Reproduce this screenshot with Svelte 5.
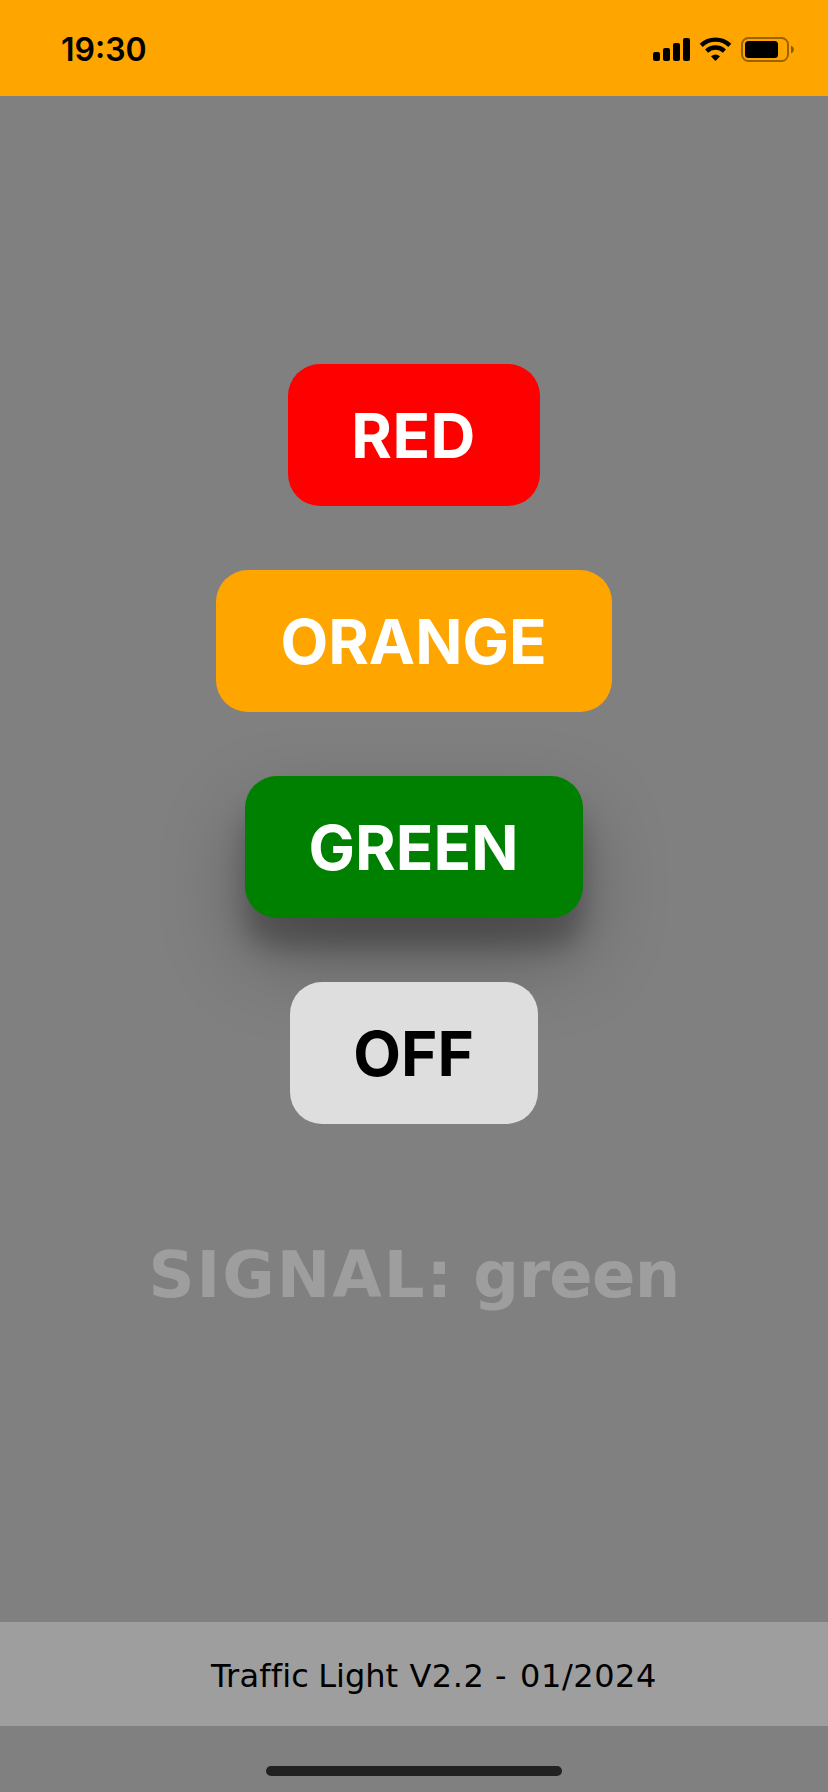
<script>
  let signal = $state('green');
  const lights = ['red', 'orange', 'green', 'off'];
  const version = [
    ['name', 'Traffic '],
    ['title', 'Light '],
    ['number', 'V2.2 '],
    ['dash', '- '],
    ['date', '01/2024']
  ];
</script>

<div class="app">
  <header>
    <time>19:30</time>
    <svg width="142" height="26" viewBox="0 0 142 26" aria-hidden="true">
      <rect x="0" y="15" width="7" height="9" rx="2" />
      <rect x="10" y="11" width="7" height="13" rx="2" />
      <rect x="20" y="6" width="7" height="18" rx="2" />
      <rect x="30" y="1" width="7" height="23" rx="2" />
      <g fill="none" stroke="#000" stroke-width="4.3">
        <path d="M48.2 8.4a20.6 20.6 0 0 1 28.6 0" />
        <path d="M53.6 14.1a12.8 12.8 0 0 1 17.8 0" />
      </g>
      <path d="M58 19.2q4.5-3.6 9 0l-3.6 4q-.9.9-1.8 0z" />
      <rect x="89" y="1" width="46" height="23" rx="6.5" fill="none" stroke="#000" stroke-opacity=".4" stroke-width="2" />
      <rect x="92" y="4" width="33" height="17" rx="3.5" />
      <path d="M138 8.5q3 1.5 3 4t-3 4z" fill-opacity=".45" />
    </svg>
  </header>

  <main>
    {#each lights as light}
      <button class={light} class:active={signal === light} onclick={() => (signal = light)}>
        <span>{light.toUpperCase()}</span>
      </button>
    {/each}
    <p><span class="label">{'SIGNAL: '}</span><span class="value">{signal}</span></p>
  </main>

  <footer>
    <div class="version">{#each version as [part, text]}<span class={part}>{text}</span>{/each}</div>
  </footer>
  <div class="home"><i></i></div>
</div>

<style>
  :global(body) {
    margin: 0;
    background: #808080;
  }
  .app {
    width: 828px;
    height: 1792px;
    display: flex;
    flex-direction: column;
    background: #808080;
    overflow: hidden;
  }
  header {
    height: 96px;
    flex: none;
    box-sizing: border-box;
    padding: 0 33px 0 61px;
    display: flex;
    align-items: center;
    justify-content: space-between;
    background: #ffa500;
  }
  time {
    font: 600 32px/40px Inter, sans-serif;
    padding-top: 4px;
  }
  header svg {
    padding-top: 4px;
  }
  main {
    flex: 1;
    display: flex;
    flex-direction: column;
    align-items: center;
    gap: 64px;
    padding-top: 268px;
  }
  button {
    height: 142px;
    flex: none;
    box-sizing: border-box;
    padding: 2px 1px 0 0;
    border: 0;
    border-radius: 32px;
    display: flex;
    align-items: center;
    justify-content: center;
    font: 700 62px/76px Inter, sans-serif;
    color: #fff;
    white-space: nowrap;
  }
  .red {
    width: 252px;
    background: #f00;
    letter-spacing: 0.5px;
  }
  .orange {
    width: 396px;
    background: #ffa500;
  }
  .green {
    width: 338px;
    background: #008000;
  }
  .off {
    width: 248px;
    background: #dedede;
    color: #000;
    z-index: 1;
  }
  .active {
    box-shadow: 0 38px 84px rgba(0, 0, 0, 0.3), 0 30px 24px rgba(0, 0, 0, 0.22);
  }
  main p {
    margin: 48px 0 0;
    font: 700 64px/78px "DejaVu Sans", Verdana, sans-serif;
    color: #9e9e9e;
    white-space: pre;
  }
  .label {
    letter-spacing: 1.95px;
    word-spacing: -5px;
  }
  .value {
    letter-spacing: -0.7px;
  }
  footer {
    height: 104px;
    flex: none;
    box-sizing: border-box;
    padding: 3px 0 0 40px;
    display: flex;
    align-items: center;
    justify-content: center;
    background: #9e9e9e;
  }
  .version {
    font: 32px/40px "DejaVu Sans", Verdana, sans-serif;
    white-space: pre;
  }
  .name {
    letter-spacing: 0.2px;
    word-spacing: -1.2px;
  }
  .title {
    word-spacing: 1.2px;
  }
  .number {
    letter-spacing: 0.5px;
  }
  .dash {
    word-spacing: 3.4px;
  }
  .date {
    letter-spacing: 0.57px;
  }
  .home {
    height: 66px;
    flex: none;
    box-sizing: border-box;
    padding-top: 40px;
    display: flex;
    justify-content: center;
  }
  .home i {
    width: 296px;
    height: 10px;
    border-radius: 5px;
    background: #212121;
  }
</style>
